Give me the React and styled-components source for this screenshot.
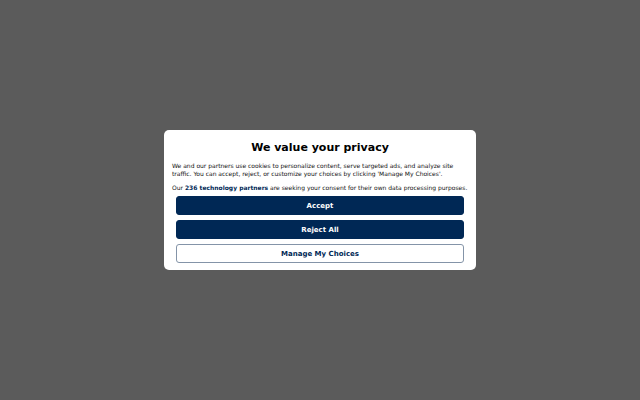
import React from 'react';
import styled, { createGlobalStyle } from 'styled-components';

const Global = createGlobalStyle`
  html, body {
    margin: 0;
    padding: 0;
    height: 100%;
  }
  #root {
    height: 100%;
  }
`

const Overlay = styled.div`
  font-family: 'DejaVu Sans', Verdana, sans-serif;
  height: 100vh;
  width: 100vw;
  background-color: #5b5b5b;
  display: flex;
  justify-content: center;
  align-items: center;
`

const Modal = styled.div`
  width: 312px;
  box-sizing: border-box;
  background-color: white;
  border-radius: 5px;
  padding: 11px 8px 7px;
  display: flex;
  flex-direction: column;
`

const Title = styled.h2`
  margin: 0 0 8px;
  font-size: 11px;
  font-weight: bold;
  text-align: center;
  color: #000;
`

const Text = styled.p`
  margin: 0 0 ${p => p.$gap || 6}px;
  font-size: 6px;
  line-height: 8px;
  color: #111;
`

const Partners = styled.a`
  color: #002855;
  font-weight: bold;
  text-decoration: none;
`

const Buttons = styled.div`
  display: flex;
  flex-direction: column;
  gap: 5px;
  padding: 0 4px;
`

const Button = styled.button`
  font-family: inherit;
  height: 19px;
  border-radius: 3px;
  font-size: 7px;
  font-weight: bold;
  cursor: pointer;
  border: 1px solid ${p => p.$outline ? '#8494a8' : '#002855'};
  background-color: ${p => p.$outline ? 'white' : '#002855'};
  color: ${p => p.$outline ? '#002855' : 'white'};
`

const App = () => {
  return (<>
    <Global />
    <Overlay>
      <Modal>
        <Title>We value your privacy</Title>
        <Text>
          We and our partners use cookies to personalize content, serve targeted ads, and analyze site
          traffic. You can accept, reject, or customize your choices by clicking 'Manage My Choices'.
        </Text>
        <Text $gap={4}>
          Our <Partners href="#">236 technology partners</Partners> are seeking your consent for their own data processing purposes.
        </Text>
        <Buttons>
          <Button>Accept</Button>
          <Button>Reject All</Button>
          <Button $outline>Manage My Choices</Button>
        </Buttons>
      </Modal>
    </Overlay>
  </>);
}

export default App;
